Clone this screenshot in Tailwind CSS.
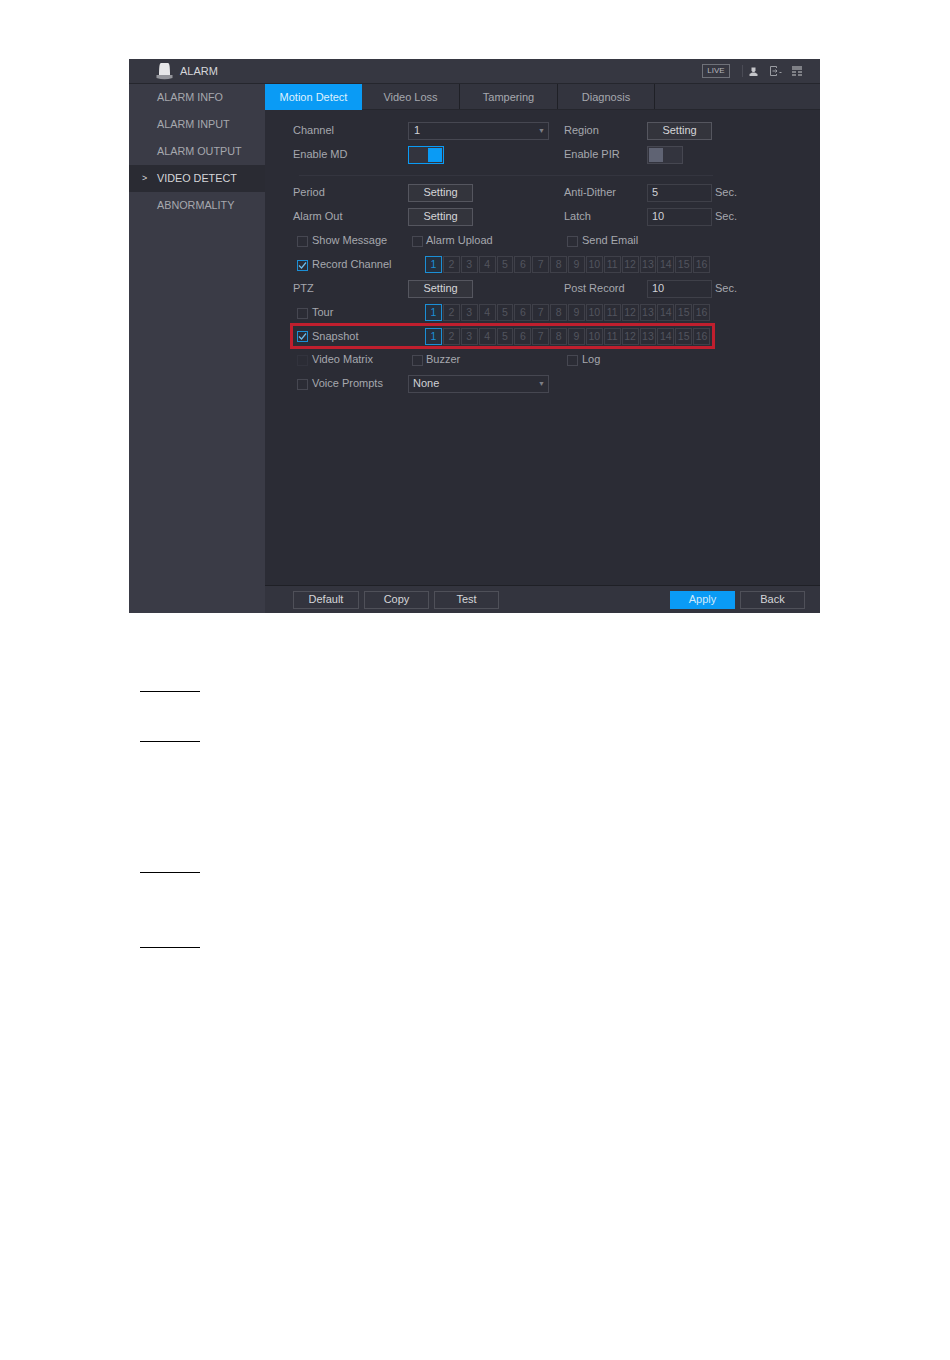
<!DOCTYPE html>
<html><head><meta charset="utf-8"><script src="https://cdn.jsdelivr.net/npm/@tailwindcss/browser@4"></script></head>
<body class="bg-white font-['Liberation_Sans',sans-serif] w-[950px] h-[1360px] overflow-hidden">
<div class="pt-[59px] pl-[129px]">
<div class="w-[691px] h-[554px] bg-[#2b2c35] flex flex-col text-[11px] leading-[15px] text-[#a6a8ae]">
  <div class="h-[25px] flex items-center bg-[#363741] border-b border-[#25262d] shrink-0">
    <svg class="ml-[27px] w-[17px] h-[18px]" viewBox="0 0 17 18"><path d="M3 13 C3 5 3.500 1 5 1 H12 C13.500 1 14 5 14 13Z" fill="#e6e6e8"/><path d="M0.500 13h16v3q-8 2.500-16 0z" fill="#93949a"/></svg>
    <span class="ml-[7px] text-[#d5d6d9] pt-px">ALARM</span>
    <div class="ml-auto flex items-center mr-[18px]">
      <span class="w-[28px] h-[14px] border border-[#6f7179] text-[8px] leading-[12px] text-center text-[#b5b6bb]">LIVE</span>
      <span class="w-px h-[12px] bg-[#4a4b55] ml-[12px]"></span>
      <svg class="ml-[6px] w-[9px] h-[10px]" viewBox="0 0 9 10"><path d="M2.500 1.500h4v3l-1 1.500h-2l-1-1.500z" fill="#c5c6ca"/><path d="M0.500 10V8L3 6.500h3L8.500 8v2z" fill="#c5c6ca"/></svg>
      <svg class="ml-[12px] w-[12px] h-[10px]" viewBox="0 0 12 10" fill="none" stroke="#9a9ca2"><path d="M6.500 2V0.500H0.500v9H6.500V8M2.500 5H7M5.500 3.500L7 5 5.500 6.500"/><path d="M9.500 6.500h2"/></svg>
      <svg class="ml-[10px] w-[10px] h-[10px]" viewBox="0 0 10 10" fill="#7f8086"><path d="M0 0h10v4H0zM0 5h4v2H0zM6 5h4v2H6zM0 8h4v2H0zM6 8h4v2H6z"/></svg>
    </div>
  </div>
  <div class="flex flex-1 min-h-0">
    <div class="w-[136px] bg-[#3a3b46] shrink-0 text-[10.8px]">
      <div class="h-[27px] pl-[28px] flex items-center">ALARM INFO</div>
      <div class="h-[27px] pl-[28px] flex items-center">ALARM INPUT</div>
      <div class="h-[27px] pl-[28px] flex items-center">ALARM OUTPUT</div>
      <div class="h-[27px] pl-[13px] flex items-center bg-[#2a2b33] text-[#d5d6d9]"><span class="w-[15px] text-[9px]">&gt;</span>VIDEO DETECT</div>
      <div class="h-[27px] pl-[28px] flex items-center">ABNORMALITY</div>
    </div>
    <div class="flex-1 flex flex-col min-w-0">
      <div class="h-[26px] flex bg-[#33343e] border-b border-[#25262d] shrink-0">
        <div class="w-[97px] h-[26px] bg-[#0a9bf5] text-[#dff1fd] flex items-center justify-center pt-px">Motion Detect</div>
        <div class="w-[98px] flex items-center justify-center border-r border-[#1f2026] pt-px">Video Loss</div>
        <div class="w-[98px] flex items-center justify-center border-r border-[#1f2026] pt-px">Tampering</div>
        <div class="w-[97px] flex items-center justify-center border-r border-[#1f2026] pt-px">Diagnosis</div>
      </div>
      <div class="relative flex-1 pl-[28px] pt-[9px]">
        <div class="grid grid-cols-[115px_156px_83px_1fr] auto-rows-[24px] items-center">
          <span class="pb-[2px]">Channel</span>
          <div class="w-[141px] h-[18px] border border-[#464751] pl-[5px] pb-[2px] flex items-center text-[#d0d1d5]">1<span class="ml-auto mr-[3px] text-[#7d7f86] text-[7px]">▼</span></div>
          <span class="pb-[2px]">Region</span>
          <div class="w-[65px] h-[18px] border border-[#55565f] bg-[#33343c] text-[#d5d6d9] pb-[2px] flex items-center justify-center">Setting</div>

          <span class="pb-[2px]">Enable MD</span>
          <div class="w-[36px] h-[18px] border border-[#0a9bf5] bg-[#33343e] flex justify-end items-center pr-px"><span class="w-[14px] h-[14px] bg-[#0a9bf5]"></span></div>
          <span class="pb-[2px]">Enable PIR</span>
          <div class="w-[36px] h-[18px] border border-[#464751] bg-[#33343e] flex items-center pl-px"><span class="w-[14px] h-[14px] bg-[#5f6373]"></span></div>
        </div>
        <div class="w-[414px] ml-[6px] h-px bg-[#34353f] mt-[8px] mb-[5px]"></div>
        <div class="grid grid-cols-[115px_156px_83px_1fr] grid-rows-[24px_24px_24px_24px_24px_24px_23px_24px_24px] items-center">
          <span class="pb-[2px]">Period</span>
          <div class="w-[65px] h-[18px] border border-[#55565f] bg-[#33343c] text-[#d5d6d9] pb-[2px] flex items-center justify-center">Setting</div>
          <span class="pb-[2px]">Anti-Dither</span>
          <div class="flex items-center"><div class="w-[65px] h-[18px] border border-[#3f4049] pl-[4px] pb-[2px] text-[#d0d1d5] flex items-center">5</div><span class="ml-[3px] pb-[2px]">Sec.</span></div>

          <span class="pb-[2px]">Alarm Out</span>
          <div class="w-[65px] h-[18px] border border-[#55565f] bg-[#33343c] text-[#d5d6d9] pb-[2px] flex items-center justify-center">Setting</div>
          <span class="pb-[2px]">Latch</span>
          <div class="flex items-center"><div class="w-[65px] h-[18px] border border-[#3f4049] pl-[4px] pb-[2px] text-[#d0d1d5] flex items-center">10</div><span class="ml-[3px] pb-[2px]">Sec.</span></div>

          <div class="flex items-center pl-[4px]"><span class="w-[11px] h-[11px] border border-[#464751]"></span><span class="ml-[4px] pb-[2px]">Show Message</span></div>
          <div class="flex items-center pl-[4px]"><span class="w-[11px] h-[11px] border border-[#464751]"></span><span class="ml-[3px] pb-[2px]">Alarm Upload</span></div>
          <div class="flex items-center pl-[3px] col-span-2"><span class="w-[11px] h-[11px] border border-[#464751]"></span><span class="ml-[4px] pb-[2px]">Send Email</span></div>

          <div class="flex items-center pl-[4px]"><span class="w-[11px] h-[11px] border border-[#1b8fd6] flex items-center justify-center"><svg class="w-[9px] h-[9px]" viewBox="0 0 9 9" fill="none" stroke="#6dbdec" stroke-width="1.200"><path d="M1 4.500L3.500 7 8 1.500"/></svg></span><span class="ml-[4px] pb-[2px]">Record Channel</span></div>
          <div class="col-span-3 pl-[17px] grid grid-cols-16 gap-px w-[302px] h-[17px] mb-[2px] text-[#52545e] text-center leading-[15px] text-[10.5px]">
            <span class="border border-[#1b8fd6] text-[#1b8fd6] bg-[#25303e]">1</span><span class="border border-[#3f4049]">2</span><span class="border border-[#3f4049]">3</span><span class="border border-[#3f4049]">4</span><span class="border border-[#3f4049]">5</span><span class="border border-[#3f4049]">6</span><span class="border border-[#3f4049]">7</span><span class="border border-[#3f4049]">8</span><span class="border border-[#3f4049]">9</span><span class="border border-[#3f4049]">10</span><span class="border border-[#3f4049]">11</span><span class="border border-[#3f4049]">12</span><span class="border border-[#3f4049]">13</span><span class="border border-[#3f4049]">14</span><span class="border border-[#3f4049]">15</span><span class="border border-[#3f4049]">16</span>
          </div>

          <span class="pb-[2px]">PTZ</span>
          <div class="w-[65px] h-[18px] border border-[#55565f] bg-[#33343c] text-[#d5d6d9] pb-[2px] flex items-center justify-center">Setting</div>
          <span class="pb-[2px]">Post Record</span>
          <div class="flex items-center"><div class="w-[65px] h-[18px] border border-[#3f4049] pl-[4px] pb-[2px] text-[#d0d1d5] flex items-center">10</div><span class="ml-[3px] pb-[2px]">Sec.</span></div>

          <div class="flex items-center pl-[4px]"><span class="w-[11px] h-[11px] border border-[#464751]"></span><span class="ml-[4px] pb-[2px]">Tour</span></div>
          <div class="col-span-3 pl-[17px] grid grid-cols-16 gap-px w-[302px] h-[17px] mb-[2px] text-[#52545e] text-center leading-[15px] text-[10.5px]">
            <span class="border border-[#1b8fd6] text-[#1b8fd6] bg-[#25303e]">1</span><span class="border border-[#3f4049]">2</span><span class="border border-[#3f4049]">3</span><span class="border border-[#3f4049]">4</span><span class="border border-[#3f4049]">5</span><span class="border border-[#3f4049]">6</span><span class="border border-[#3f4049]">7</span><span class="border border-[#3f4049]">8</span><span class="border border-[#3f4049]">9</span><span class="border border-[#3f4049]">10</span><span class="border border-[#3f4049]">11</span><span class="border border-[#3f4049]">12</span><span class="border border-[#3f4049]">13</span><span class="border border-[#3f4049]">14</span><span class="border border-[#3f4049]">15</span><span class="border border-[#3f4049]">16</span>
          </div>

          <div class="flex items-center pl-[4px]"><span class="w-[11px] h-[11px] border border-[#1b8fd6] flex items-center justify-center"><svg class="w-[9px] h-[9px]" viewBox="0 0 9 9" fill="none" stroke="#6dbdec" stroke-width="1.200"><path d="M1 4.500L3.500 7 8 1.500"/></svg></span><span class="ml-[4px]">Snapshot</span></div>
          <div class="col-span-3 pl-[17px] grid grid-cols-16 gap-px w-[302px] h-[17px] text-[#52545e] text-center leading-[15px] text-[10.5px]">
            <span class="border border-[#1b8fd6] text-[#1b8fd6] bg-[#25303e]">1</span><span class="border border-[#3f4049]">2</span><span class="border border-[#3f4049]">3</span><span class="border border-[#3f4049]">4</span><span class="border border-[#3f4049]">5</span><span class="border border-[#3f4049]">6</span><span class="border border-[#3f4049]">7</span><span class="border border-[#3f4049]">8</span><span class="border border-[#3f4049]">9</span><span class="border border-[#3f4049]">10</span><span class="border border-[#3f4049]">11</span><span class="border border-[#3f4049]">12</span><span class="border border-[#3f4049]">13</span><span class="border border-[#3f4049]">14</span><span class="border border-[#3f4049]">15</span><span class="border border-[#3f4049]">16</span>
          </div>

          <div class="flex items-center pl-[4px]"><span class="w-[11px] h-[11px] border border-[#32333d]"></span><span class="ml-[4px] pb-[2px]">Video Matrix</span></div>
          <div class="flex items-center pl-[4px]"><span class="w-[11px] h-[11px] border border-[#464751]"></span><span class="ml-[3px] pb-[2px]">Buzzer</span></div>
          <div class="flex items-center pl-[3px] col-span-2"><span class="w-[11px] h-[11px] border border-[#464751]"></span><span class="ml-[4px] pb-[2px]">Log</span></div>

          <div class="flex items-center pl-[4px]"><span class="w-[11px] h-[11px] border border-[#464751]"></span><span class="ml-[4px] pb-[2px]">Voice Prompts</span></div>
          <div class="col-span-3 w-[141px] h-[18px] border border-[#464751] pl-[4px] pb-[2px] flex items-center text-[#d0d1d5]">None<span class="ml-auto mr-[3px] text-[#7d7f86] text-[7px]">▼</span></div>
        </div>
        <div class="absolute left-[25px] top-[213px] w-[425px] h-[26px] border-[3px] border-[#c01f2e]"></div>
      </div>
      <div class="h-[28px] shrink-0 bg-[#33343e] border-t border-[#1f2026] flex items-center pl-[28px] pr-[15px] pt-px">
        <div class="flex gap-[5px] text-[#d5d6d9]">
          <div class="w-[66px] h-[18px] border border-[#4f5059] pb-[2px] flex items-center justify-center">Default</div>
          <div class="w-[65px] h-[18px] border border-[#4f5059] pb-[2px] flex items-center justify-center">Copy</div>
          <div class="w-[65px] h-[18px] border border-[#4f5059] pb-[2px] flex items-center justify-center">Test</div>
        </div>
        <div class="ml-auto flex gap-[5px]">
          <div class="w-[65px] h-[18px] bg-[#0a9bf5] text-[#cfe9fb] pb-[2px] flex items-center justify-center">Apply</div>
          <div class="w-[65px] h-[18px] border border-[#4f5059] text-[#d5d6d9] pb-[2px] flex items-center justify-center">Back</div>
        </div>
      </div>
    </div>
  </div>
</div>
<div class="w-[60px] ml-[11px] mt-[78px]">
  <div class="h-px bg-black"></div>
  <div class="h-px bg-black mt-[49px]"></div>
  <div class="h-px bg-black mt-[130px]"></div>
  <div class="h-px bg-black mt-[74px]"></div>
</div>
</div>
</body></html>
